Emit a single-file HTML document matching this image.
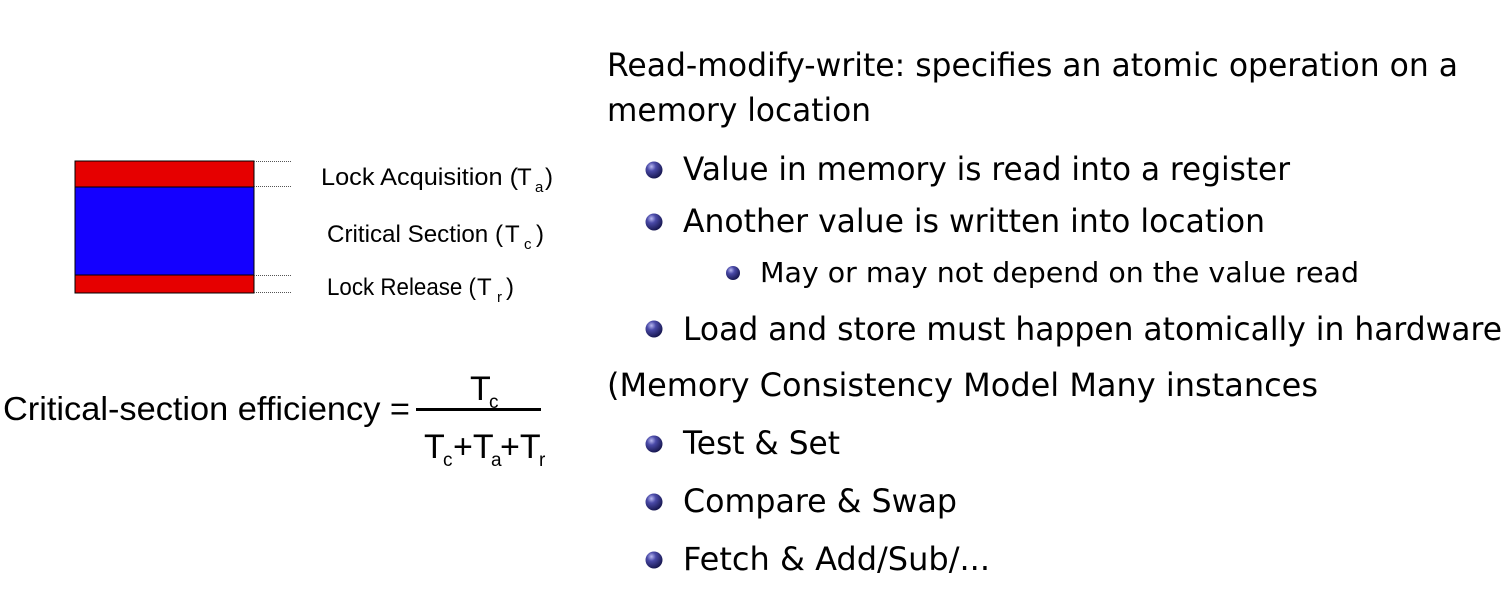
<!DOCTYPE html>
<html><head><meta charset="utf-8"><style>
html,body{margin:0;padding:0;background:#fff;width:1509px;height:596px;overflow:hidden}
svg text{font-family:"DejaVu Sans","Liberation Sans",sans-serif;fill:#000}
.l text{font-family:"Liberation Sans",sans-serif}
</style></head><body>
<svg width="1509" height="596" xmlns="http://www.w3.org/2000/svg">
<defs>
<radialGradient id="b" cx="0.35" cy="0.3" r="0.75">
<stop offset="0" stop-color="#b8b8f0"/><stop offset="0.35" stop-color="#4a4aa8"/><stop offset="1" stop-color="#14144a"/>
</radialGradient>
</defs>
<g class="l">
<rect x="75" y="161" width="179" height="26" fill="#e60000" stroke="#000" stroke-width="1"/>
<rect x="75" y="187" width="179" height="88" fill="#1400ff" stroke="#000" stroke-width="1"/>
<rect x="75" y="275" width="179" height="18" fill="#e60000" stroke="#000" stroke-width="1"/>
<g stroke="#555" stroke-width="1" stroke-dasharray="1,1">
<line x1="254" y1="161.5" x2="292" y2="161.5"/><line x1="254" y1="186.5" x2="292" y2="186.5"/>
<line x1="254" y1="275.5" x2="292" y2="275.5"/><line x1="254" y1="292.5" x2="292" y2="292.5"/>
</g>
<text x="321" y="185" font-size="24" textLength="197" lengthAdjust="spacingAndGlyphs">Lock Acquisition (</text>
<text x="517" y="185" font-size="24">T</text>
<text x="535" y="192" font-size="15">a</text><text x="545" y="185" font-size="24">)</text>
<text x="327" y="242" font-size="24" textLength="176" lengthAdjust="spacingAndGlyphs">Critical Section (</text>
<text x="505" y="242" font-size="24">T</text>
<text x="524" y="249" font-size="15">c</text><text x="536" y="242" font-size="24">)</text>
<text x="327" y="295" font-size="24" textLength="149" lengthAdjust="spacingAndGlyphs">Lock Release (</text>
<text x="477" y="295" font-size="24">T</text>
<text x="497" y="302" font-size="15">r</text><text x="506" y="295" font-size="24">)</text>
<text x="3" y="420" font-size="33" textLength="407" lengthAdjust="spacingAndGlyphs">Critical-section efficiency =</text>
<rect x="416" y="408" width="125" height="3" fill="#000"/>
<text x="470" y="400" font-size="34">T</text><text x="489" y="408" font-size="19">c</text>
<text x="424" y="458" font-size="34">T</text><text x="443" y="466" font-size="19">c</text>
<text x="453" y="458" font-size="34">+T</text><text x="491" y="466" font-size="19">a</text>
<text x="500" y="458" font-size="34">+T</text><text x="539" y="466" font-size="19">r</text>
</g>
<g font-size="32">
<text x="607" y="76" textLength="851" lengthAdjust="spacingAndGlyphs">Read-modify-write: specifies an atomic operation on a</text>
<text x="607" y="121" textLength="264" lengthAdjust="spacingAndGlyphs">memory location</text>
<text x="683" y="180" textLength="607" lengthAdjust="spacingAndGlyphs">Value in memory is read into a register</text>
<text x="683" y="232" textLength="582" lengthAdjust="spacingAndGlyphs">Another value is written into location</text>
<text x="760" y="282" font-size="28" textLength="599" lengthAdjust="spacingAndGlyphs">May or may not depend on the value read</text>
<text x="683" y="340" textLength="819" lengthAdjust="spacingAndGlyphs">Load and store must happen atomically in hardware</text>
<text x="607" y="396" textLength="711" lengthAdjust="spacingAndGlyphs">(Memory Consistency Model Many instances</text>
<text x="683" y="454" textLength="157" lengthAdjust="spacingAndGlyphs">Test &amp; Set</text>
<text x="683" y="512" textLength="274" lengthAdjust="spacingAndGlyphs">Compare &amp; Swap</text>
<text x="683" y="570" textLength="307" lengthAdjust="spacingAndGlyphs">Fetch &amp; Add/Sub/...</text>
</g>
<g fill="url(#b)">
<circle cx="654" cy="170" r="8.5"/><circle cx="654" cy="222" r="8.5"/>
<circle cx="733" cy="273" r="7"/><circle cx="654" cy="329" r="8.5"/>
<circle cx="654" cy="444" r="8.5"/><circle cx="654" cy="502" r="8.5"/><circle cx="654" cy="560" r="8.5"/>
</g>
</svg>
</body></html>
